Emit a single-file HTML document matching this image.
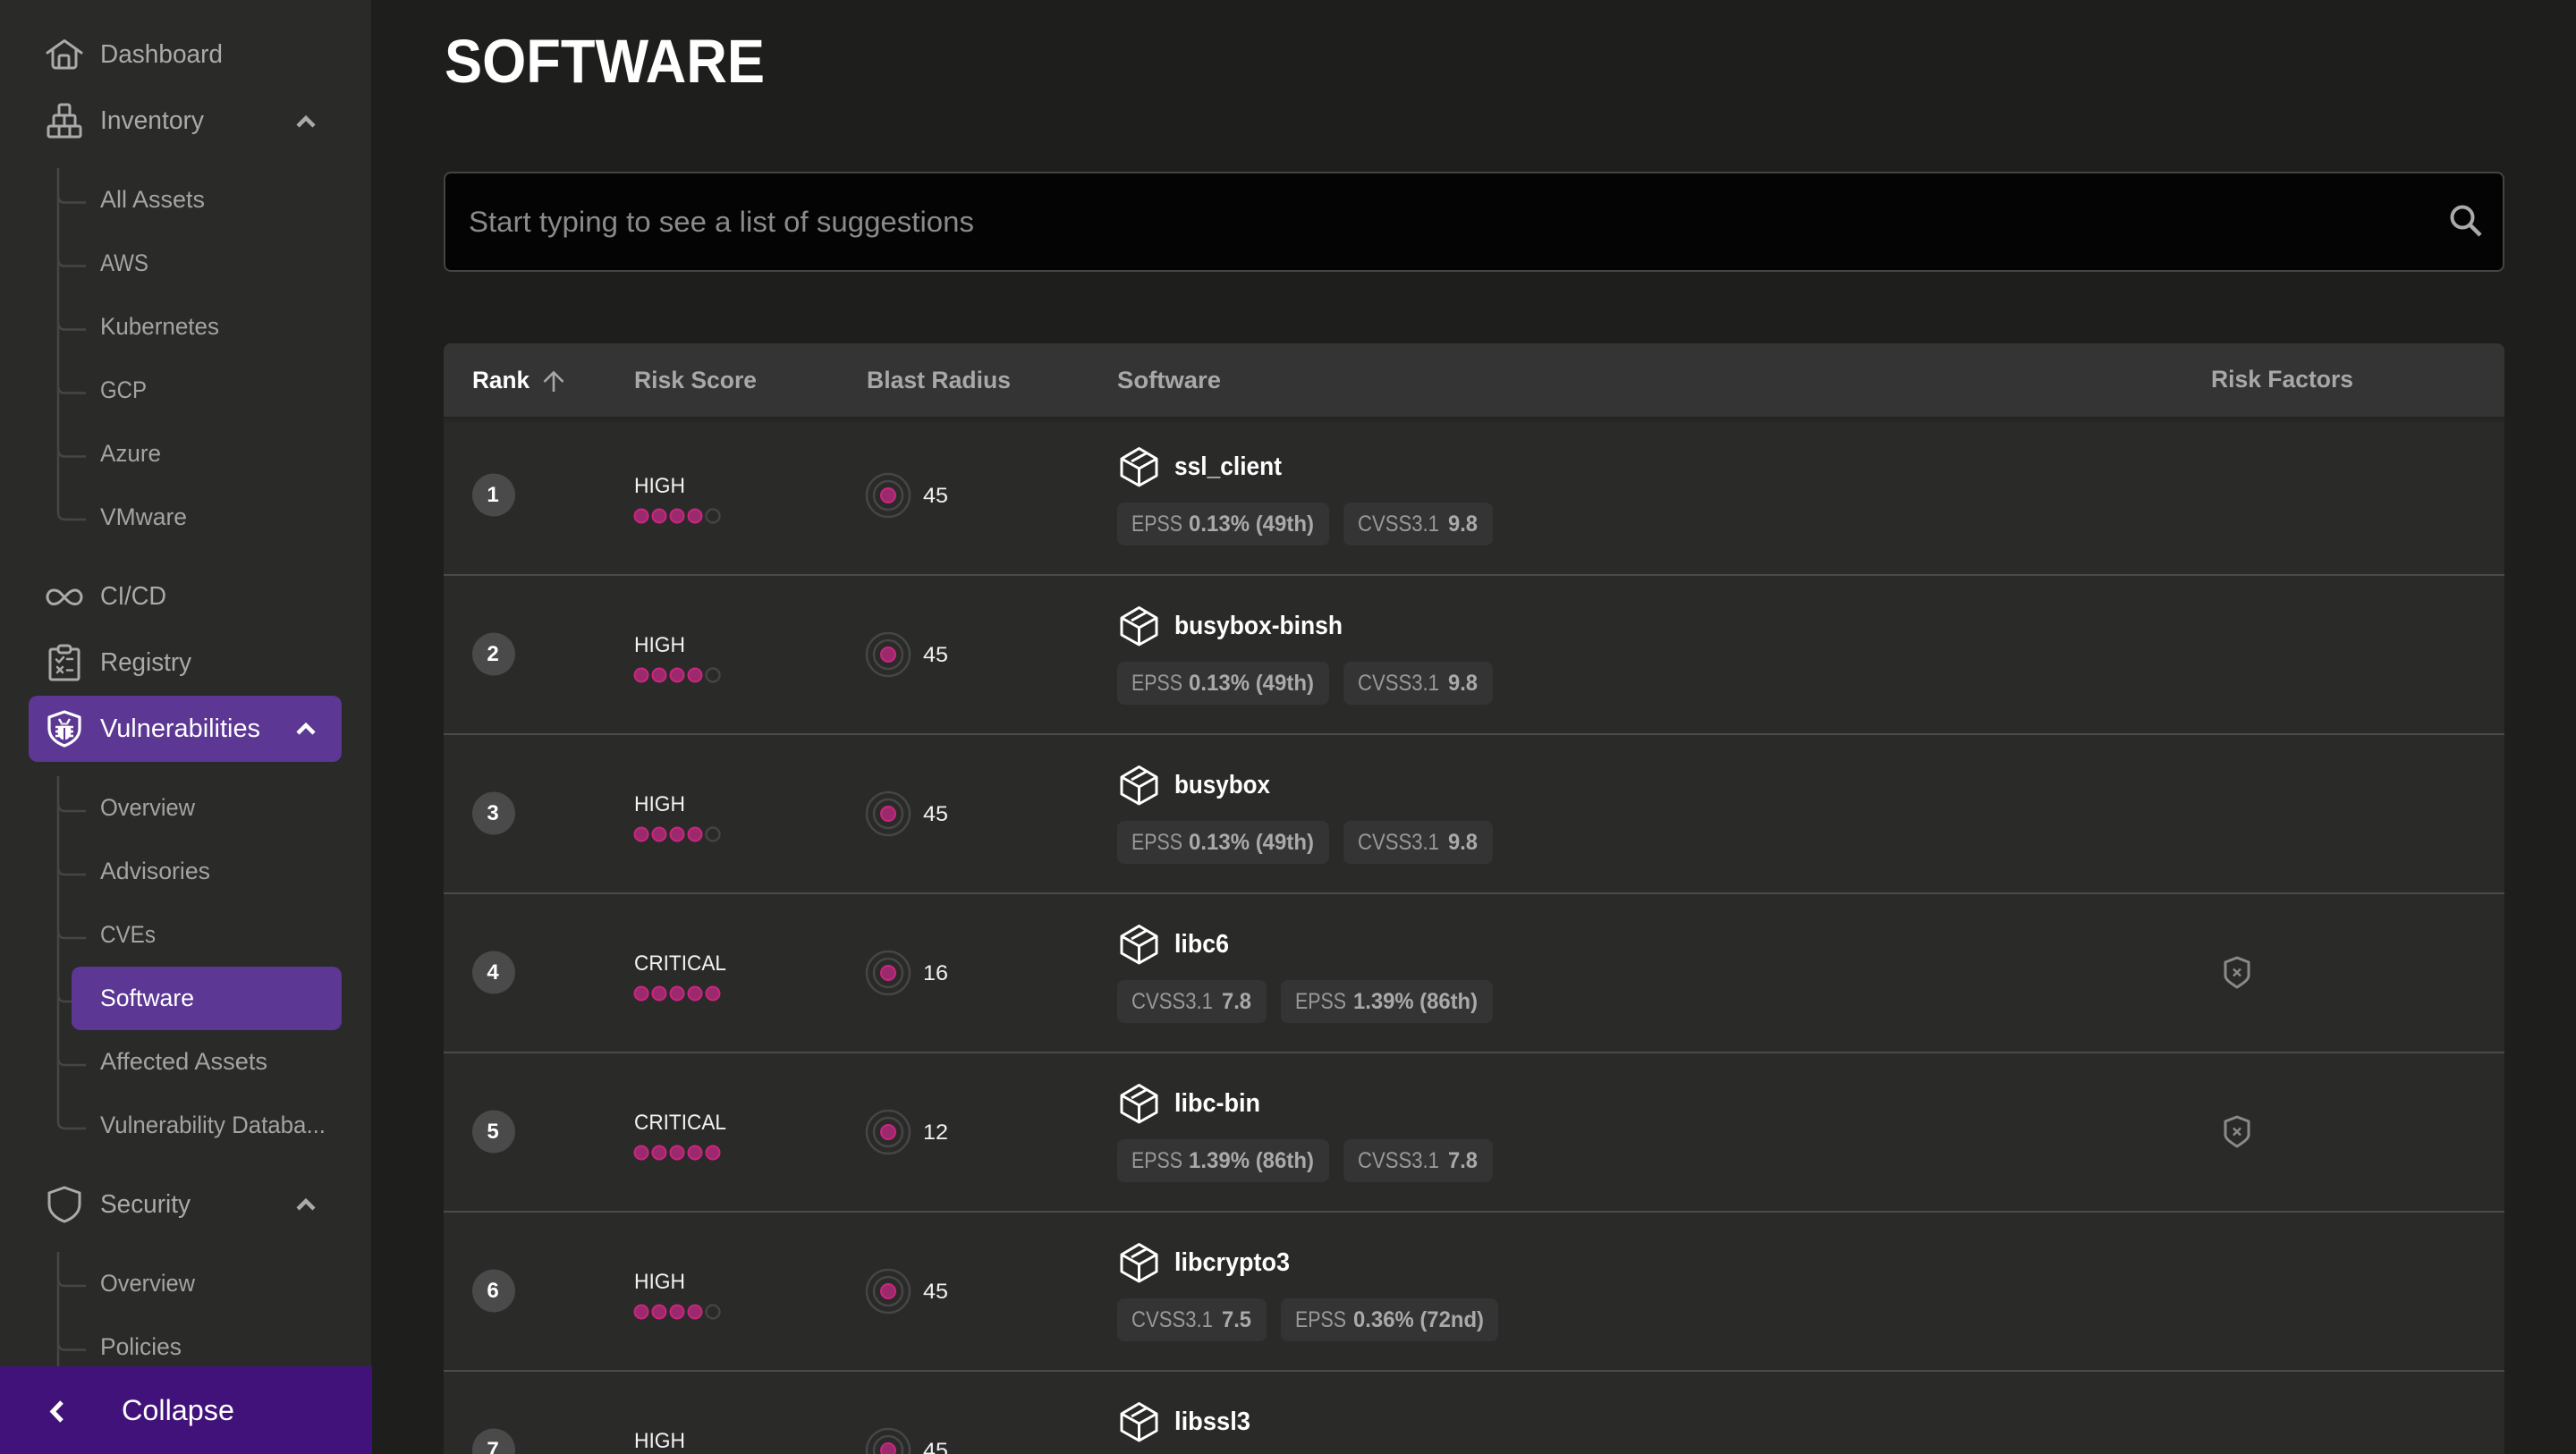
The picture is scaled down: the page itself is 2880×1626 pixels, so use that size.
<!DOCTYPE html>
<html><head><meta charset="utf-8"><title>Software</title>
<style>
html,body{margin:0;padding:0;background:#1e1e1c;width:2880px;height:1626px;overflow:hidden}
svg{display:block}
text{font-family:"Liberation Sans",sans-serif;white-space:pre}
.s{font-size:29px;fill:#aaa}
.u{font-size:27px;fill:#a4a4a4}
.w{fill:#fff}
.h{font-size:27px;font-weight:700;fill:#a8a8a8}
.n{font-size:29px;font-weight:700;fill:#fff}
.r{font-size:24px;fill:#f2f2f2}
.k{font-size:25px;fill:#999}
.v{font-size:25px;font-weight:700;fill:#aaa}
.d{font-size:24px;font-weight:700;fill:#fff;text-anchor:middle}
.ic{fill:none;stroke:#aaa;stroke-width:3;stroke-linejoin:round;stroke-linecap:round}
.tag{fill:#343434}
.box{fill:none;stroke:#fff;stroke-width:3;stroke-linejoin:round}
.dot{fill:#9a2a6c;stroke:#cc2580;stroke-width:2}
.em{fill:none;stroke:#444;stroke-width:2.5}
.ring{fill:none;stroke:#464646;stroke-width:2.5}
</style></head>
<body>
<svg width="2880" height="1626" viewBox="0 0 2880 1626" xmlns="http://www.w3.org/2000/svg">
<rect width="2880" height="1626" fill="#1e1e1c"/>

<!-- main -->
<text x="497" y="92" font-size="69" font-weight="700" fill="#fff" textLength="358" lengthAdjust="spacingAndGlyphs">SOFTWARE</text>
<rect x="497" y="193" width="2302" height="110" rx="7" fill="#040404" stroke="#444" stroke-width="2"/>
<text x="524" y="259" font-size="32" fill="#8a8a8a" textLength="565" lengthAdjust="spacingAndGlyphs">Start typing to see a list of suggestions</text>
<circle cx="2753" cy="243" r="11.5" fill="none" stroke="#aaa" stroke-width="4"/>
<path d="M2761.5 251.5L2773 263" stroke="#aaa" stroke-width="4.5" fill="none"/>

<!-- table -->
<rect x="496" y="466" width="2304" height="1160" fill="#2a2a29"/>
<path d="M496 466V392a8 8 0 0 1 8-8H2792a8 8 0 0 1 8 8V466Z" fill="#343434"/>
<defs><linearGradient id="sh" x1="0" y1="0" x2="0" y2="1"><stop offset="0" stop-color="#222221"/><stop offset="1" stop-color="#2a2a29"/></linearGradient></defs>
<rect x="496" y="466" width="2304" height="8" fill="url(#sh)"/>
<text x="528" y="434" class="h" style="fill:#fff" textLength="64" lengthAdjust="spacingAndGlyphs">Rank</text>
<path d="M619 438V417M608.500 427L619 416.500L629.500 427" fill="none" stroke="#a8a8a8" stroke-width="2.600"/>
<text x="709" y="434" class="h" textLength="137" lengthAdjust="spacingAndGlyphs">Risk Score</text>
<text x="969" y="434" class="h" textLength="161" lengthAdjust="spacingAndGlyphs">Blast Radius</text>
<text x="1249" y="434" class="h" textLength="116" lengthAdjust="spacingAndGlyphs">Software</text>
<text x="2472" y="433" class="h" textLength="159" lengthAdjust="spacingAndGlyphs">Risk Factors</text>

<g fill="#4b4b4b">
<rect x="496" y="642" width="2304" height="2"/><rect x="496" y="820" width="2304" height="2"/><rect x="496" y="998" width="2304" height="2"/><rect x="496" y="1176" width="2304" height="2"/><rect x="496" y="1354" width="2304" height="2"/><rect x="496" y="1532" width="2304" height="2"/>
</g>

<!-- row 1 -->
<g>
<circle cx="552" cy="553.500" r="24" fill="#4a4a4a"/><text x="551" y="561" class="d">1</text>
<text x="709" y="551" class="r" textLength="57" lengthAdjust="spacingAndGlyphs">HIGH</text>
<circle class="dot" cx="717" cy="577" r="7.500"/><circle class="dot" cx="737" cy="577" r="7.500"/><circle class="dot" cx="757" cy="577" r="7.500"/><circle class="dot" cx="777" cy="577" r="7.500"/><circle class="em" cx="797" cy="577" r="7.500"/>
<circle class="ring" cx="993" cy="554" r="24"/><circle class="ring" cx="993" cy="554" r="16"/><circle class="dot" cx="993" cy="554" r="8"/>
<text x="1032" y="562" class="r" textLength="28" lengthAdjust="spacingAndGlyphs">45</text>
<path class="box" d="M1273.500 501.500L1293 513V532L1273.500 543L1254 532V513ZM1254 513L1273.500 524L1293 513M1273.500 524V543M1265 516L1283 506"/>
<text x="1313" y="531" class="n" textLength="120" lengthAdjust="spacingAndGlyphs">ssl_client</text>
<rect class="tag" x="1249" y="562" width="237" height="48" rx="8"/><rect class="tag" x="1502" y="562" width="167" height="48" rx="8"/>
<text x="1265" y="594" class="k" textLength="57" lengthAdjust="spacingAndGlyphs">EPSS</text><text x="1329" y="594" class="v" textLength="140" lengthAdjust="spacingAndGlyphs">0.13% (49th)</text>
<text x="1518" y="594" class="k" textLength="91" lengthAdjust="spacingAndGlyphs">CVSS3.1</text><text x="1619" y="594" class="v" textLength="33" lengthAdjust="spacingAndGlyphs">9.8</text>
</g>

<!-- row 2 -->
<g transform="translate(0,178)">
<circle cx="552" cy="553.500" r="24" fill="#4a4a4a"/><text x="551" y="561" class="d">2</text>
<text x="709" y="551" class="r" textLength="57" lengthAdjust="spacingAndGlyphs">HIGH</text>
<circle class="dot" cx="717" cy="577" r="7.500"/><circle class="dot" cx="737" cy="577" r="7.500"/><circle class="dot" cx="757" cy="577" r="7.500"/><circle class="dot" cx="777" cy="577" r="7.500"/><circle class="em" cx="797" cy="577" r="7.500"/>
<circle class="ring" cx="993" cy="554" r="24"/><circle class="ring" cx="993" cy="554" r="16"/><circle class="dot" cx="993" cy="554" r="8"/>
<text x="1032" y="562" class="r" textLength="28" lengthAdjust="spacingAndGlyphs">45</text>
<path class="box" d="M1273.500 501.500L1293 513V532L1273.500 543L1254 532V513ZM1254 513L1273.500 524L1293 513M1273.500 524V543M1265 516L1283 506"/>
<text x="1313" y="531" class="n" textLength="188" lengthAdjust="spacingAndGlyphs">busybox-binsh</text>
<rect class="tag" x="1249" y="562" width="237" height="48" rx="8"/><rect class="tag" x="1502" y="562" width="167" height="48" rx="8"/>
<text x="1265" y="594" class="k" textLength="57" lengthAdjust="spacingAndGlyphs">EPSS</text><text x="1329" y="594" class="v" textLength="140" lengthAdjust="spacingAndGlyphs">0.13% (49th)</text>
<text x="1518" y="594" class="k" textLength="91" lengthAdjust="spacingAndGlyphs">CVSS3.1</text><text x="1619" y="594" class="v" textLength="33" lengthAdjust="spacingAndGlyphs">9.8</text>
</g>

<!-- row 3 -->
<g transform="translate(0,356)">
<circle cx="552" cy="553.500" r="24" fill="#4a4a4a"/><text x="551" y="561" class="d">3</text>
<text x="709" y="551" class="r" textLength="57" lengthAdjust="spacingAndGlyphs">HIGH</text>
<circle class="dot" cx="717" cy="577" r="7.500"/><circle class="dot" cx="737" cy="577" r="7.500"/><circle class="dot" cx="757" cy="577" r="7.500"/><circle class="dot" cx="777" cy="577" r="7.500"/><circle class="em" cx="797" cy="577" r="7.500"/>
<circle class="ring" cx="993" cy="554" r="24"/><circle class="ring" cx="993" cy="554" r="16"/><circle class="dot" cx="993" cy="554" r="8"/>
<text x="1032" y="562" class="r" textLength="28" lengthAdjust="spacingAndGlyphs">45</text>
<path class="box" d="M1273.500 501.500L1293 513V532L1273.500 543L1254 532V513ZM1254 513L1273.500 524L1293 513M1273.500 524V543M1265 516L1283 506"/>
<text x="1313" y="531" class="n" textLength="107" lengthAdjust="spacingAndGlyphs">busybox</text>
<rect class="tag" x="1249" y="562" width="237" height="48" rx="8"/><rect class="tag" x="1502" y="562" width="167" height="48" rx="8"/>
<text x="1265" y="594" class="k" textLength="57" lengthAdjust="spacingAndGlyphs">EPSS</text><text x="1329" y="594" class="v" textLength="140" lengthAdjust="spacingAndGlyphs">0.13% (49th)</text>
<text x="1518" y="594" class="k" textLength="91" lengthAdjust="spacingAndGlyphs">CVSS3.1</text><text x="1619" y="594" class="v" textLength="33" lengthAdjust="spacingAndGlyphs">9.8</text>
</g>

<!-- row 4 -->
<g transform="translate(0,534)">
<circle cx="552" cy="553.500" r="24" fill="#4a4a4a"/><text x="551" y="561" class="d">4</text>
<text x="709" y="551" class="r" textLength="103" lengthAdjust="spacingAndGlyphs">CRITICAL</text>
<circle class="dot" cx="717" cy="577" r="7.500"/><circle class="dot" cx="737" cy="577" r="7.500"/><circle class="dot" cx="757" cy="577" r="7.500"/><circle class="dot" cx="777" cy="577" r="7.500"/><circle class="dot" cx="797" cy="577" r="7.500"/>
<circle class="ring" cx="993" cy="554" r="24"/><circle class="ring" cx="993" cy="554" r="16"/><circle class="dot" cx="993" cy="554" r="8"/>
<text x="1032" y="562" class="r" textLength="28" lengthAdjust="spacingAndGlyphs">16</text>
<path class="box" d="M1273.500 501.500L1293 513V532L1273.500 543L1254 532V513ZM1254 513L1273.500 524L1293 513M1273.500 524V543M1265 516L1283 506"/>
<text x="1313" y="531" class="n" textLength="61" lengthAdjust="spacingAndGlyphs">libc6</text>
<rect class="tag" x="1249" y="562" width="167" height="48" rx="8"/><rect class="tag" x="1432" y="562" width="237" height="48" rx="8"/>
<text x="1265" y="594" class="k" textLength="91" lengthAdjust="spacingAndGlyphs">CVSS3.1</text><text x="1366" y="594" class="v" textLength="33" lengthAdjust="spacingAndGlyphs">7.8</text>
<text x="1448" y="594" class="k" textLength="57" lengthAdjust="spacingAndGlyphs">EPSS</text><text x="1513" y="594" class="v" textLength="139" lengthAdjust="spacingAndGlyphs">1.39% (86th)</text>
<path d="M2501 537L2514 542V557C2514 562 2507 566 2501 570C2495 566 2488 562 2488 557V542Z" fill="none" stroke="#8a8a8a" stroke-width="3" stroke-linejoin="round"/>
<path d="M2497 549.500L2505 557.500M2505 549.500L2497 557.500" stroke="#8a8a8a" stroke-width="2.500" fill="none"/>
</g>

<!-- row 5 -->
<g transform="translate(0,712)">
<circle cx="552" cy="553.500" r="24" fill="#4a4a4a"/><text x="551" y="561" class="d">5</text>
<text x="709" y="551" class="r" textLength="103" lengthAdjust="spacingAndGlyphs">CRITICAL</text>
<circle class="dot" cx="717" cy="577" r="7.500"/><circle class="dot" cx="737" cy="577" r="7.500"/><circle class="dot" cx="757" cy="577" r="7.500"/><circle class="dot" cx="777" cy="577" r="7.500"/><circle class="dot" cx="797" cy="577" r="7.500"/>
<circle class="ring" cx="993" cy="554" r="24"/><circle class="ring" cx="993" cy="554" r="16"/><circle class="dot" cx="993" cy="554" r="8"/>
<text x="1032" y="562" class="r" textLength="28" lengthAdjust="spacingAndGlyphs">12</text>
<path class="box" d="M1273.500 501.500L1293 513V532L1273.500 543L1254 532V513ZM1254 513L1273.500 524L1293 513M1273.500 524V543M1265 516L1283 506"/>
<text x="1313" y="531" class="n" textLength="96" lengthAdjust="spacingAndGlyphs">libc-bin</text>
<rect class="tag" x="1249" y="562" width="237" height="48" rx="8"/><rect class="tag" x="1502" y="562" width="167" height="48" rx="8"/>
<text x="1265" y="594" class="k" textLength="57" lengthAdjust="spacingAndGlyphs">EPSS</text><text x="1329" y="594" class="v" textLength="140" lengthAdjust="spacingAndGlyphs">1.39% (86th)</text>
<text x="1518" y="594" class="k" textLength="91" lengthAdjust="spacingAndGlyphs">CVSS3.1</text><text x="1619" y="594" class="v" textLength="33" lengthAdjust="spacingAndGlyphs">7.8</text>
<path d="M2501 537L2514 542V557C2514 562 2507 566 2501 570C2495 566 2488 562 2488 557V542Z" fill="none" stroke="#8a8a8a" stroke-width="3" stroke-linejoin="round"/>
<path d="M2497 549.500L2505 557.500M2505 549.500L2497 557.500" stroke="#8a8a8a" stroke-width="2.500" fill="none"/>
</g>

<!-- row 6 -->
<g transform="translate(0,890)">
<circle cx="552" cy="553.500" r="24" fill="#4a4a4a"/><text x="551" y="561" class="d">6</text>
<text x="709" y="551" class="r" textLength="57" lengthAdjust="spacingAndGlyphs">HIGH</text>
<circle class="dot" cx="717" cy="577" r="7.500"/><circle class="dot" cx="737" cy="577" r="7.500"/><circle class="dot" cx="757" cy="577" r="7.500"/><circle class="dot" cx="777" cy="577" r="7.500"/><circle class="em" cx="797" cy="577" r="7.500"/>
<circle class="ring" cx="993" cy="554" r="24"/><circle class="ring" cx="993" cy="554" r="16"/><circle class="dot" cx="993" cy="554" r="8"/>
<text x="1032" y="562" class="r" textLength="28" lengthAdjust="spacingAndGlyphs">45</text>
<path class="box" d="M1273.500 501.500L1293 513V532L1273.500 543L1254 532V513ZM1254 513L1273.500 524L1293 513M1273.500 524V543M1265 516L1283 506"/>
<text x="1313" y="531" class="n" textLength="129" lengthAdjust="spacingAndGlyphs">libcrypto3</text>
<rect class="tag" x="1249" y="562" width="167" height="48" rx="8"/><rect class="tag" x="1432" y="562" width="243" height="48" rx="8"/>
<text x="1265" y="594" class="k" textLength="91" lengthAdjust="spacingAndGlyphs">CVSS3.1</text><text x="1366" y="594" class="v" textLength="33" lengthAdjust="spacingAndGlyphs">7.5</text>
<text x="1448" y="594" class="k" textLength="57" lengthAdjust="spacingAndGlyphs">EPSS</text><text x="1513" y="594" class="v" textLength="146" lengthAdjust="spacingAndGlyphs">0.36% (72nd)</text>
</g>

<!-- row 7 -->
<g transform="translate(0,1068)">
<circle cx="552" cy="553.500" r="24" fill="#4a4a4a"/><text x="551" y="561" class="d">7</text>
<text x="709" y="551" class="r" textLength="57" lengthAdjust="spacingAndGlyphs">HIGH</text>
<circle class="ring" cx="993" cy="554" r="24"/><circle class="ring" cx="993" cy="554" r="16"/><circle class="dot" cx="993" cy="554" r="8"/>
<text x="1032" y="562" class="r" textLength="28" lengthAdjust="spacingAndGlyphs">45</text>
<path class="box" d="M1273.500 501.500L1293 513V532L1273.500 543L1254 532V513ZM1254 513L1273.500 524L1293 513M1273.500 524V543M1265 516L1283 506"/>
<text x="1313" y="531" class="n" textLength="85" lengthAdjust="spacingAndGlyphs">libssl3</text>
</g>

<!-- sidebar -->
<rect x="0" y="0" width="415" height="1626" fill="#2a2a29"/>

<!-- trees -->
<g fill="none" stroke="#464646" stroke-width="2.500">
<path d="M65 188V573Q65 581 73 581H96M65 220Q66 226.500 72 226.500H96M65 291Q66 297.500 72 297.500H96M65 362Q66 368.500 72 368.500H96M65 433Q66 439.500 72 439.500H96M65 504Q66 510.500 72 510.500H96"/>
<path d="M65 868V1254Q65 1262 73 1262H96M65 900Q66 907 72 907H96M65 971Q66 978 72 978H96M65 1042Q66 1049 72 1049H96M65 1113Q66 1120 72 1120H96M65 1184Q66 1191 72 1191H96"/>
<path d="M65 1400V1530M65 1431Q66 1438 72 1438H96M65 1502Q66 1509.500 72 1509.500H96"/>
</g>

<!-- home -->
<g class="ic"><path d="M53 59L72 45.500L91 59"/><path d="M59 55V73a3 3 0 0 0 3 3H82a3 3 0 0 0 3-3V55"/><path d="M66 76V64a2 2 0 0 1 2-2H75a2 2 0 0 1 2 2V76"/></g>
<text x="112" y="70" class="s" textLength="137" lengthAdjust="spacingAndGlyphs">Dashboard</text>

<!-- inventory -->
<g class="ic"><path d="M66 129V119a2 2 0 0 1 2-2H76a2 2 0 0 1 2 2V129"/><path d="M60 141V131a2 2 0 0 1 2-2H82a2 2 0 0 1 2 2V141M72 129V141"/><rect x="54" y="141" width="36" height="12" rx="2"/><path d="M66 141V153M78 141V153"/></g>
<text x="112" y="144" class="s" textLength="116" lengthAdjust="spacingAndGlyphs">Inventory</text>
<path d="M333 141L342 132L351 141" fill="none" stroke="#aaa" stroke-width="4.500"/>

<text x="112" y="232" class="u" textLength="117" lengthAdjust="spacingAndGlyphs">All Assets</text>
<text x="112" y="303" class="u" textLength="54" lengthAdjust="spacingAndGlyphs">AWS</text>
<text x="112" y="374" class="u" textLength="133" lengthAdjust="spacingAndGlyphs">Kubernetes</text>
<text x="112" y="445" class="u" textLength="52" lengthAdjust="spacingAndGlyphs">GCP</text>
<text x="112" y="516" class="u" textLength="68" lengthAdjust="spacingAndGlyphs">Azure</text>
<text x="112" y="587" class="u" textLength="97" lengthAdjust="spacingAndGlyphs">VMware</text>

<!-- ci/cd -->
<path class="ic" d="M72 668C67 662 65 660 60 660C55.500 660 53 664 53 667.500C53 671.500 56 675.500 60 675.500C65 675.500 68 672 72 668C76 664 79 660 84 660C88 660 91 664 91 667.500C91 671.500 88.500 675.500 84 675.500C79 675.500 76 672.500 72 668Z"/>
<text x="112" y="676" class="s" textLength="74" lengthAdjust="spacingAndGlyphs">CI/CD</text>

<!-- registry -->
<g class="ic"><path d="M65 726H58a2 2 0 0 0-2 2V758a2 2 0 0 0 2 2H86a2 2 0 0 0 2-2V728a2 2 0 0 0-2-2H79"/><rect x="65" y="722" width="14" height="8" rx="3"/><path d="M63 737.500L66 740.500L71 735M75 737H81M64 746L70 752M70 746L64 752M75 749.500H81" stroke-width="2.500"/></g>
<text x="112" y="750" class="s" textLength="102" lengthAdjust="spacingAndGlyphs">Registry</text>

<!-- vulnerabilities -->
<rect x="32" y="778" width="350" height="74" rx="10" fill="#5c3794"/>
<path d="M72 796L89 802V815C89 825 80 831 72 834C64 831 55 825 55 815V802Z" fill="none" stroke="#fff" stroke-width="3.200" stroke-linejoin="round"/>
<g fill="none" stroke="#fff" stroke-width="2.400"><path d="M66 804L69 809M78 804L75 809M62 813H66M62 818H66M62 823H66M82 813H78M82 818H78M82 823H78"/></g>
<ellipse cx="72" cy="818" rx="7.500" ry="9.500" fill="#fff"/><path d="M72 814V828" stroke="#5c3794" stroke-width="2"/><path d="M66 811H78" stroke="#5c3794" stroke-width="1.200"/>
<text x="112" y="824" class="s w" textLength="179" lengthAdjust="spacingAndGlyphs">Vulnerabilities</text>
<path d="M333 820L342 811L351 820" fill="none" stroke="#fff" stroke-width="4.500"/>

<text x="112" y="912" class="u" textLength="106" lengthAdjust="spacingAndGlyphs">Overview</text>
<text x="112" y="983" class="u" textLength="123" lengthAdjust="spacingAndGlyphs">Advisories</text>
<text x="112" y="1054" class="u" textLength="62" lengthAdjust="spacingAndGlyphs">CVEs</text>
<rect x="80" y="1081" width="302" height="71" rx="10" fill="#5c3794"/>
<text x="112" y="1125" class="u w" textLength="105" lengthAdjust="spacingAndGlyphs">Software</text>
<text x="112" y="1196" class="u" textLength="187" lengthAdjust="spacingAndGlyphs">Affected Assets</text>
<text x="112" y="1267" class="u" textLength="252" lengthAdjust="spacingAndGlyphs">Vulnerability Databa...</text>

<!-- security -->
<path class="ic" d="M72 1328L89 1334V1347C89 1357 80 1363 72 1366C64 1363 55 1357 55 1347V1334Z"/>
<text x="112" y="1356" class="s" textLength="101" lengthAdjust="spacingAndGlyphs">Security</text>
<path d="M333 1352L342 1343L351 1352" fill="none" stroke="#aaa" stroke-width="4.500"/>
<text x="112" y="1444" class="u" textLength="106" lengthAdjust="spacingAndGlyphs">Overview</text>
<text x="112" y="1515" class="u" textLength="91" lengthAdjust="spacingAndGlyphs">Policies</text>

<!-- collapse -->
<rect x="0" y="1528" width="416" height="98" fill="#41137a"/>
<path d="M69 1568L59 1578.500L69 1589" fill="none" stroke="#fff" stroke-width="5"/>
<text x="136" y="1588" font-size="32" fill="#fff" textLength="126" lengthAdjust="spacingAndGlyphs">Collapse</text>
</svg>
</body></html>
